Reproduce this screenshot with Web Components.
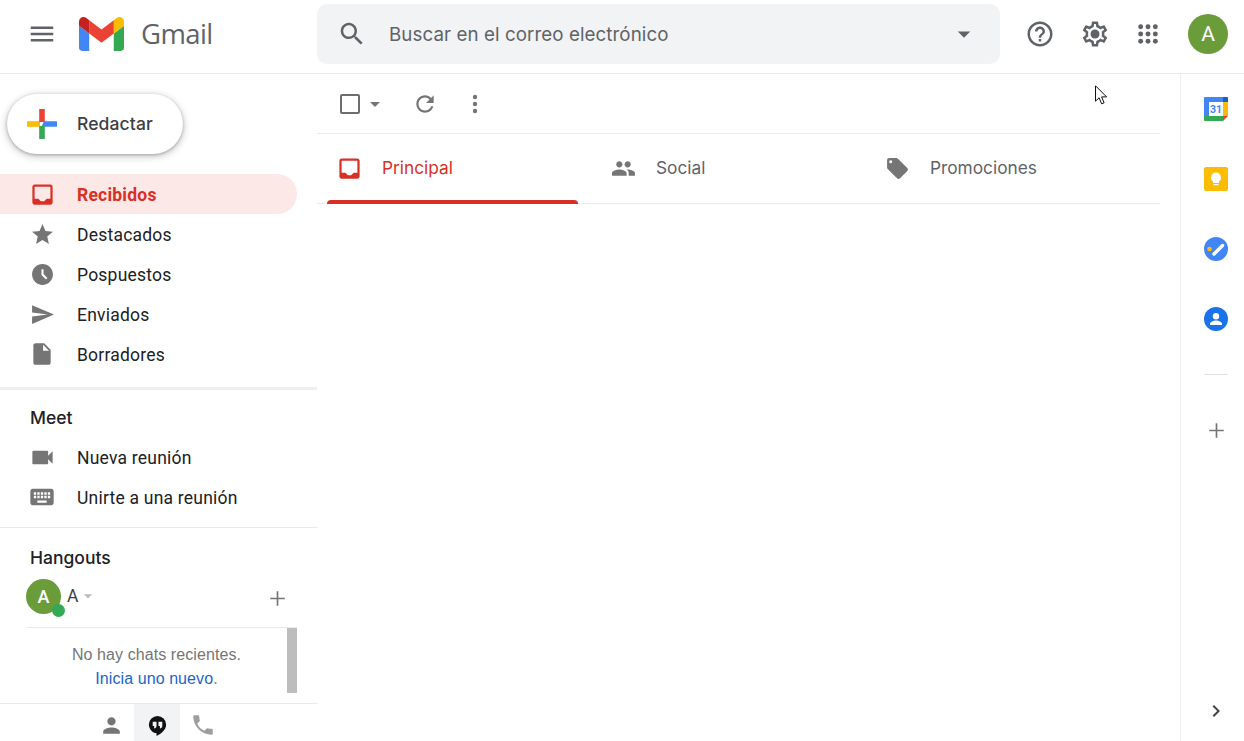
<!DOCTYPE html>
<html lang="es">
<head>
<meta charset="utf-8">
<title>Gmail</title>
<style>
  html, body { margin: 0; height: 100%; background: #fff; overflow: hidden; }
  body { font-family: Roboto, "Liberation Sans", sans-serif; color: #202124; }
</style>
</head>
<body>
<gm-app>
  <gm-header slot="header"></gm-header>
  <gm-sidebar slot="sidebar">
    <gm-compose slot="compose">Redactar</gm-compose>
    <gm-nav-item slot="nav" icon="inbox" icon-size="27" active>Recibidos</gm-nav-item>
    <gm-nav-item slot="nav" icon="star" icon-size="25">Destacados</gm-nav-item>
    <gm-nav-item slot="nav" icon="clock" icon-size="25">Pospuestos</gm-nav-item>
    <gm-nav-item slot="nav" icon="send" icon-size="25">Enviados</gm-nav-item>
    <gm-nav-item slot="nav" icon="draft" icon-size="26">Borradores</gm-nav-item>
    <gm-nav-item slot="meet" icon="video" icon-size="27">Nueva reunión</gm-nav-item>
    <gm-nav-item slot="meet" icon="keyboard" icon-size="28">Unirte a una reunión</gm-nav-item>
    <gm-hangouts slot="hangouts"></gm-hangouts>
  </gm-sidebar>
  <gm-main slot="main">
    <gm-tab slot="tabs" icon="inbox" icon-size="27" active>Principal</gm-tab>
    <gm-tab slot="tabs" icon="people" icon-size="25">Social</gm-tab>
    <gm-tab slot="tabs" icon="label" icon-size="25">Promociones</gm-tab>
  </gm-main>
  <gm-rail slot="rail"></gm-rail>
</gm-app>

<script>
const ICONS = {
  menu: '<path d="M3 18h18v-2H3v2zm0-5h18v-2H3v2zm0-7v2h18V6H3z"/>',
  search: '<path d="M15.5 14h-.79l-.28-.27C15.41 12.59 16 11.11 16 9.5 16 5.91 13.09 3 9.5 3S3 5.91 3 9.5 5.91 16 9.5 16c1.61 0 3.09-.59 4.23-1.57l.27.28v.79l5 4.99L20.49 19l-4.99-5zm-6 0C7.01 14 5 11.99 5 9.5S7.01 5 9.5 5 14 7.01 14 9.5 11.99 14 9.5 14z"/>',
  help: '<path d="M11 18h2v-2h-2v2zm1-16C6.48 2 2 6.48 2 12s4.48 10 10 10 10-4.48 10-10S17.52 2 12 2zm0 18c-4.41 0-8-3.59-8-8s3.59-8 8-8 8 3.59 8 8-3.59 8-8 8zm0-14c-2.21 0-4 1.79-4 4h2c0-1.1.9-2 2-2s2 .9 2 2c0 2-3 1.75-3 5h2c0-2.25 3-2.5 3-5 0-2.21-1.79-4-4-4z"/>',
  settings: '<path d="M19.43 12.98c.04-.32.07-.64.07-.98 0-.34-.03-.66-.07-.98l2.11-1.65c.19-.15.24-.42.12-.64l-2-3.46c-.09-.16-.26-.25-.44-.25-.06 0-.12.01-.17.03l-2.49 1c-.52-.4-1.08-.73-1.69-.98l-.38-2.65C14.46 2.18 14.25 2 14 2h-4c-.25 0-.46.18-.49.42l-.38 2.65c-.61.25-1.17.59-1.69.98l-2.49-1c-.06-.02-.12-.03-.18-.03-.17 0-.34.09-.43.25l-2 3.46c-.13.22-.07.49.12.64l2.11 1.65c-.04.32-.07.65-.07.98 0 .33.03.66.07.98l-2.11 1.65c-.19.15-.24.42-.12.64l2 3.46c.09.16.26.25.44.25.06 0 .12-.01.17-.03l2.49-1c.52.4 1.08.73 1.69.98l.38 2.65c.03.24.24.42.49.42h4c.25 0 .46-.18.49-.42l.38-2.65c.61-.25 1.17-.59 1.69-.98l2.49 1c.06.02.12.03.18.03.17 0 .34-.09.43-.25l2-3.46c.12-.22.07-.49-.12-.64l-2.11-1.65zm-1.98-1.71c.04.31.05.52.05.73 0 .21-.02.43-.05.73l-.14 1.13.89.7 1.08.84-.7 1.21-1.27-.51-1.04-.42-.9.68c-.43.32-.84.56-1.25.73l-1.06.43-.16 1.13-.2 1.35h-1.4l-.19-1.35-.16-1.13-1.06-.43c-.43-.18-.83-.41-1.23-.71l-.91-.7-1.06.43-1.27.51-.7-1.21 1.08-.84.89-.7-.14-1.13c-.03-.31-.05-.54-.05-.74s.02-.43.05-.73l.14-1.13-.89-.7-1.08-.84.7-1.21 1.27.51 1.04.42.9-.68c.43-.32.84-.56 1.25-.73l1.06-.43.16-1.13.2-1.35h1.39l.19 1.35.16 1.13 1.06.43c.43.18.83.41 1.23.71l.91.7 1.06-.43 1.27-.51.7 1.21-1.07.85-.89.7.14 1.13z"/><circle cx="12" cy="12" r="3.6"/>',
  apps: '<circle cx="4" cy="4" r="2.7"/><circle cx="12" cy="4" r="2.7"/><circle cx="20" cy="4" r="2.7"/><circle cx="4" cy="12" r="2.7"/><circle cx="12" cy="12" r="2.7"/><circle cx="20" cy="12" r="2.7"/><circle cx="4" cy="20" r="2.7"/><circle cx="12" cy="20" r="2.7"/><circle cx="20" cy="20" r="2.7"/>',
  inbox: '<path fill-rule="evenodd" d="M19 3H5c-1.1 0-2 .9-2 2v14c0 1.1.9 2 2 2h14c1.1 0 2-.9 2-2V5c0-1.1-.9-2-2-2zm0 12.7h-3.3L13.5 18h-3l-2.200-2.300H5V5h14z"/>',
  star: '<path d="M12 17.27L18.18 21l-1.64-7.03L22 9.24l-7.19-.61L12 2 9.19 8.63 2 9.24l5.46 4.73L5.82 21z"/>',
  clock: '<path d="M11.99 2C6.47 2 2 6.48 2 12s4.47 10 9.99 10C17.52 22 22 17.52 22 12S17.52 2 11.99 2zm3.3 14.71L11 12.41V7h2v4.59l3.71 3.71-1.42 1.41z"/>',
  send: '<path d="M2.01 21L23 12 2.01 3 2 10l15 2-15 2z"/>',
  draft: '<path d="M6 2c-1.1 0-1.99.9-1.99 2L4 20c0 1.1.89 2 1.99 2H18c1.1 0 2-.9 2-2V8l-6-6H6zm7 7V3.5L18.5 9H13z"/>',
  video: '<path d="M17 10.5V7c0-.55-.45-1-1-1H4c-.55 0-1 .45-1 1v10c0 .55.45 1 1 1h12c.55 0 1-.45 1-1v-3.5l4 4v-11l-4 4z"/>',
  keyboard: '<path d="M20 5H4c-1.1 0-1.99.9-1.99 2L2 17c0 1.1.9 2 2 2h16c1.1 0 2-.9 2-2V7c0-1.1-.9-2-2-2zm-9 3h2v2h-2V8zm0 3h2v2h-2v-2zM8 8h2v2H8V8zm0 3h2v2H8v-2zm-1 2H5v-2h2v2zm0-3H5V8h2v2zm9 7H8v-2h8v2zm0-4h-2v-2h2v2zm0-3h-2V8h2v2zm3 3h-2v-2h2v2zm0-3h-2V8h2v2z"/>',
  people: '<path d="M16 11c1.66 0 2.99-1.34 2.99-3S17.66 5 16 5c-1.66 0-3 1.34-3 3s1.34 3 3 3zm-8 0c1.66 0 2.99-1.34 2.99-3S9.66 5 8 5C6.34 5 5 6.34 5 8s1.34 3 3 3zm0 2c-2.33 0-7 1.17-7 3.5V19h14v-2.5c0-2.33-4.67-3.5-7-3.5zm8 0c-.29 0-.62.02-.97.05 1.16.84 1.97 1.97 1.97 3.45V19h6v-2.5c0-2.33-4.67-3.5-7-3.5z"/>',
  label: '<path d="M21.41 11.58l-9-9C12.05 2.22 11.55 2 11 2H4c-1.1 0-2 .9-2 2v7c0 .55.22 1.05.59 1.42l9 9c.36.36.86.58 1.41.58.55 0 1.05-.22 1.41-.59l7-7c.37-.36.59-.86.59-1.41 0-.55-.23-1.06-.59-1.42zM5.5 7C4.67 7 4 6.33 4 5.5S4.67 4 5.5 4 7 4.67 7 5.5 6.33 7 5.5 7z"/>',
  refresh: '<path d="M17.65 6.35C16.2 4.9 14.21 4 12 4c-4.42 0-7.99 3.58-7.99 8s3.57 8 7.99 8c3.73 0 6.84-2.55 7.73-6h-2.08c-.82 2.33-3.04 4-5.65 4-3.31 0-6-2.69-6-6s2.69-6 6-6c1.66 0 3.14.69 4.22 1.78L13 11h7V4l-2.35 2.35z"/>',
  more: '<circle cx="12" cy="5" r="2.2"/><circle cx="12" cy="12" r="2.2"/><circle cx="12" cy="19" r="2.2"/>',
  person: '<path d="M12 12c2.21 0 4-1.79 4-4s-1.79-4-4-4-4 1.79-4 4 1.79 4 4 4zm0 2c-2.67 0-8 1.34-8 4v2h16v-2c0-2.66-5.33-4-8-4z"/>',
  phone: '<path d="M6.62 10.79c1.44 2.83 3.76 5.14 6.59 6.59l2.2-2.2c.27-.27.67-.36 1.02-.24 1.12.37 2.33.57 3.57.57.55 0 1 .45 1 1V20c0 .55-.45 1-1 1-9.39 0-17-7.61-17-17 0-.55.45-1 1-1h3.5c.55 0 1 .45 1 1 0 1.25.2 2.45.57 3.57.11.35.03.74-.25 1.02l-2.2 2.2z"/>',
  chat: '<path fill-rule="evenodd" d="M12 2a9 9 0 0 0-9 9c0 5 4 9 8 9v3c5-2.400 10-6.500 10-12a9 9 0 0 0-9-9zM7 8h4v4.500c0 1.600-1.200 2.500-2.500 2.500v-2.500H7zm6 0h4v4.500c0 1.600-1.200 2.500-2.500 2.500v-2.500H13z"/>',
  plus: '<path d="M19 12.800h-6.200V19h-1.600v-6.200H5v-1.600h6.200V5h1.600v6.200H19z"/>',
  chevron: '<path d="M10 6L8.590 7.410 13.170 12l-4.580 4.590L10 18l6-6z"/>',
  caret: '<path d="M7 10l5 5 5-5z"/>'
};

class GmIcon extends HTMLElement {
  connectedCallback () {
    const size = this.getAttribute("size") || 24;
    const color = this.getAttribute("color") || "#5f6368";
    this.attachShadow({ mode: "open" }).innerHTML = `
    <style>
      :host { display: inline-flex; width: ${size}px; height: ${size}px; flex: none; }
      svg { width: 100%; height: 100%; fill: ${color}; display: block; }
    </style>
    <svg viewBox="0 0 24 24">${ICONS[this.getAttribute("name")] || ""}</svg>`;
  }
}

class GmApp extends HTMLElement {
  constructor () {
    super();
    this.attachShadow({ mode: "open" }).innerHTML = `
    <style>
      :host { display: flex; flex-direction: column; height: 741px; position: relative; overflow: hidden; }
      .body { flex: 1; min-height: 0; display: flex; }
      .cursor { position: absolute; left: 1095px; top: 85px; width: 13px; height: 20px; }
    </style>
    <slot name="header"></slot>
    <div class="body">
      <slot name="sidebar"></slot>
      <slot name="main"></slot>
      <slot name="rail"></slot>
    </div>
    <svg class="cursor" viewBox="0 0 13 20"><path d="M.5.800v15.400l3.600-3.400 2.500 6 2.500-1-2.500-5.900h5z" fill="#fff" stroke="#111" stroke-width="1"/></svg>`;
  }
}

class GmHeader extends HTMLElement {
  constructor () {
    super();
    this.attachShadow({ mode: "open" }).innerHTML = `
    <style>
      :host { display: flex; align-items: center; height: 73px; border-bottom: 1px solid #e8eaed; flex: none; box-sizing: content-box; }
      .brand { width: 317px; display: flex; align-items: center; flex: none; padding-left: 27px; box-sizing: border-box; margin-top: -5px; }
      .logo { width: 45px; height: 34px; margin-left: 22px; display: block; }
      .word { font: 400 27.5px/1 "Open Sans", sans-serif; color: #5f6368; margin-left: 17px; letter-spacing: -0.6px; }
      .search { width: 683px; height: 60px; background: #f1f3f4; border-radius: 10px; display: flex; align-items: center; box-sizing: border-box; padding: 0 21px 0 20px; margin-top: -5px; flex: none; }
      .search span { flex: 1; margin-left: 22px; padding-top: 2px; font: 400 18.75px/1 Inter, sans-serif; color: #5f6368; letter-spacing: 0.07px; }
      .actions { display: flex; align-items: center; flex: 1; margin-top: -5px; padding-left: 25px; }
      .help { margin-right: 25px; }
      .gear { margin-right: 27px; }
      .apps { margin-right: 29px; }
      .avatar { width: 40px; height: 40px; border-radius: 50%; background: #6a9c3a; color: #fff; font: 400 21px/40px Roboto, sans-serif; text-align: center; }
    </style>
    <div class="brand">
      <gm-icon name="menu" size="30"></gm-icon>
      <svg class="logo" viewBox="52 42 88 66">
        <path fill="#4285f4" d="M58 108h14V74L52 59v43c0 3.320 2.690 6 6 6"/>
        <path fill="#34a853" d="M120 108h14c3.320 0 6-2.690 6-6V59l-20 15"/>
        <path fill="#fbbc04" d="M120 48v26l20-15v-8c0-7.420-8.470-11.650-14.400-7.200"/>
        <path fill="#ea4335" d="M72 74V48l24 18 24-18v26L96 92"/>
        <path fill="#c5221f" d="M52 51v8l20 15V48l-5.600-4.200c-5.940-4.450-14.400-.220-14.400 7.200"/>
      </svg>
      <span class="word">Gmail</span>
    </div>
    <div class="search">
      <gm-icon name="search" size="30"></gm-icon>
      <span>Buscar en el correo electrónico</span>
      <gm-icon name="caret" size="30"></gm-icon>
    </div>
    <div class="actions">
      <gm-icon class="help" name="help" size="30"></gm-icon>
      <gm-icon class="gear" name="settings" size="30"></gm-icon>
      <gm-icon class="apps" name="apps" size="22"></gm-icon>
      <div class="avatar">A</div>
    </div>`;
  }
}

class GmCompose extends HTMLElement {
  constructor () {
    super();
    this.attachShadow({ mode: "open" }).innerHTML = `
    <style>
      :host { display: flex; align-items: center; width: 176px; height: 60px; border-radius: 30px; background: #fff; box-sizing: border-box; padding-left: 20px; box-shadow: 0 1px 3px rgba(60,64,67,.35), 0 2px 6px 2px rgba(60,64,67,.2); flex: none; }
      svg { width: 30px; height: 30px; flex: none; }
      span { margin-left: 20px; font: 500 17.5px/1 Inter, sans-serif; color: #3c4043; letter-spacing: .1px; }
    </style>
    <svg viewBox="0 0 30 30">
      <path fill="#fbbc04" d="M0 12.200h13v5.600H0z"/>
      <path fill="#ea4335" d="M12.200 0h5.600v13h-5.600z"/>
      <path fill="#4285f4" d="M17 12.200h13v5.600H14.500z"/>
      <path fill="#34a853" d="M12.200 17h5.600v13h-5.600z"/>
    </svg>
    <span><slot></slot></span>`;
  }
}

class GmNavItem extends HTMLElement {
  constructor () {
    super();
    this.attachShadow({ mode: "open" });
  }

  connectedCallback () {
    const active = this.hasAttribute("active");
    const icon = this.getAttribute("icon");
    const size = this.getAttribute("icon-size") || 25;
    this.shadowRoot.innerHTML = `
    <style>
      :host { display: flex; align-items: center; height: 40px; width: 297px; box-sizing: border-box; padding-left: 27px; border-radius: 0 20px 20px 0; background: ${active ? "#fce8e6" : "transparent"}; color: ${active ? "#d93025" : "#202124"}; font: ${active ? 700 : 400} 17.5px/1 Roboto, sans-serif; letter-spacing: .22px; }
      .slot { width: 30px; display: flex; justify-content: center; flex: none; }
      span { margin-left: 20px; padding-top: 4px; }
    </style>
    <div class="slot"><gm-icon name="${icon}" size="${size}" color="${active ? "#d93025" : "#757575"}"></gm-icon></div>
    <span><slot></slot></span>`;
  }
}

class GmSidebar extends HTMLElement {
  constructor () {
    super();
    this.attachShadow({ mode: "open" }).innerHTML = `
    <style>
      :host { display: flex; flex-direction: column; width: 317px; flex: none; }
      .top { height: 313px; padding: 20px 0 0 7px; box-sizing: border-box; flex: none; }
      nav { display: flex; flex-direction: column; margin: 20px 0 0 -7px; }
      .meet { height: 141px; box-sizing: border-box; border-top: 3px solid #eef0f0; flex: none; border-bottom: 1px solid #e8eaed; }
      h3 { margin: 0; font: 500 17.5px/1 Inter, sans-serif; color: #202124; padding-left: 30px; }
      .meet h3 { padding-top: 19px; height: 47px; box-sizing: border-box; }
      .rows { display: flex; flex-direction: column; }
    </style>
    <div class="top">
      <slot name="compose"></slot>
      <nav><slot name="nav"></slot></nav>
    </div>
    <div class="meet">
      <h3>Meet</h3>
      <div class="rows"><slot name="meet"></slot></div>
    </div>
    <slot name="hangouts"></slot>`;
  }
}

class GmHangouts extends HTMLElement {
  constructor () {
    super();
    this.attachShadow({ mode: "open" }).innerHTML = `
    <style>
      :host { display: flex; flex-direction: column; flex: 1; min-height: 0; }
      h3 { margin: 0; font: 500 17.5px/1 Inter, sans-serif; color: #202124; padding: 21px 0 0 30px; height: 51px; box-sizing: border-box; flex: none; }
      .me { display: flex; align-items: center; height: 49px; margin-left: 26px; width: 271px; border-bottom: 1px solid #e8eaed; box-sizing: border-box; padding-bottom: 13px; flex: none; }
      .avatar { width: 35px; height: 35px; border-radius: 50%; background: #6a9c3a; color: #fff; font: 500 18px/35px Roboto, sans-serif; text-align: center; position: relative; flex: none; }
      .avatar i { position: absolute; left: 26px; top: 25px; width: 13px; height: 13px; border-radius: 50%; background: #34a853; }
      .name { margin-left: 6px; font: 400 17.5px/1 Roboto, sans-serif; color: #3c4043; }
      .caret { margin-left: 0; margin-top: -1px; }
      .plus { margin-left: auto; margin-right: 7px; margin-top: 4px; }
      .list { height: 75px; margin-left: 26px; width: 271px; display: flex; flex: none; }
      .msg { flex: 1; text-align: center; font: 400 16px/24px "Liberation Sans", Arial, sans-serif; color: #757575; padding-top: 15px; box-sizing: border-box; letter-spacing: .08px; }
      .msg a { color: #1a66c7; text-decoration: none; }
      .bar { width: 10px; height: 65px; background: #bdbdbd; flex: none; }
      .tabs { flex: 1; border-top: 1px solid #e8eaed; display: flex; justify-content: center; padding-right: 3px; }
      .tab { width: 46px; display: flex; align-items: center; justify-content: center; padding-top: 5px; box-sizing: border-box; }
      .tab.on { background: #f1f3f4; }
    </style>
    <h3>Hangouts</h3>
    <div class="me">
      <div class="avatar">A<i></i></div>
      <span class="name">A</span>
      <gm-icon class="caret" name="caret" size="20" color="#bdbdbd"></gm-icon>
      <gm-icon class="plus" name="plus" size="25" color="#757575"></gm-icon>
    </div>
    <div class="list">
      <div class="msg">No hay chats recientes.<br><a>Inicia uno nuevo</a>.</div>
      <div class="bar"></div>
    </div>
    <div class="tabs">
      <div class="tab"><gm-icon name="person" size="25" color="#757575"></gm-icon></div>
      <div class="tab on"><gm-icon name="chat" size="23" color="#111"></gm-icon></div>
      <div class="tab"><gm-icon name="phone" size="26" color="#9e9e9e"></gm-icon></div>
    </div>`;
  }
}

class GmTab extends HTMLElement {
  constructor () {
    super();
    this.attachShadow({ mode: "open" });
  }

  connectedCallback () {
    const active = this.hasAttribute("active");
    const size = this.getAttribute("icon-size") || 25;
    this.shadowRoot.innerHTML = `
    <style>
      :host { display: flex; align-items: center; position: relative; height: 69px; padding: 0 0 1px 17px; box-sizing: border-box; color: ${active ? "#d93025" : "#5f6368"}; font: 400 17.3px/1 Inter, sans-serif; }
      .slot { width: 30px; display: flex; justify-content: center; flex: none; }
      span { margin-left: 18px; }
      .bar { position: absolute; left: 10px; width: 251px; bottom: -1px; height: 4px; border-radius: 4px 4px 0 0; background: #d93025; display: ${active ? "block" : "none"}; }
    </style>
    <div class="slot"><gm-icon name="${this.getAttribute("icon")}" size="${size}" color="${active ? "#d93025" : "#757575"}"></gm-icon></div>
    <span><slot></slot></span>
    <div class="bar"></div>`;
  }
}

class GmMain extends HTMLElement {
  constructor () {
    super();
    this.attachShadow({ mode: "open" }).innerHTML = `
    <style>
      :host { display: block; flex: 1; min-width: 0; margin-right: 20px; }
      .toolbar { height: 60px; border-bottom: 1px solid #e8eaed; display: flex; align-items: center; padding-left: 18px; box-sizing: border-box; }
      .check { width: 20px; height: 20px; border: 2px solid #6b6e72; border-radius: 2px; box-sizing: border-box; margin-left: 5px; margin-top: 1px; }
      .tabs { display: grid; grid-template-columns: repeat(3, 274px); border-bottom: 1px solid #e8eaed; height: 70px; box-sizing: border-box; }
      .caret { margin-left: 3px; }
      .refresh { margin-left: 25px; margin-top: 1px; }
      .more { margin-left: 25px; margin-top: 1px; }
    </style>
    <div class="toolbar">
      <div class="check"></div>
      <gm-icon class="caret" name="caret" size="24" color="#757575"></gm-icon>
      <gm-icon class="refresh" name="refresh" size="26" color="#757575"></gm-icon>
      <gm-icon class="more" name="more" size="24" color="#757575"></gm-icon>
    </div>
    <div class="tabs"><slot name="tabs"></slot></div>`;
  }
}

class GmRail extends HTMLElement {
  constructor () {
    super();
    this.attachShadow({ mode: "open" }).innerHTML = `
    <style>
      :host { display: flex; flex-direction: column; align-items: center; width: 64px; flex: none; border-left: 1px solid #eceef0; box-sizing: border-box; padding: 23px 0 18px 7px; }
      .app { width: 24px; height: 24px; margin-bottom: 46px; display: block; flex: none; }
      hr { width: 24px; margin: 0 0 43px; border: 0; border-top: 1px solid #e0e0e0; }
      .sep { margin-top: -3px; }
      .end { margin-top: auto; }
    </style>
    <svg class="app" viewBox="0 0 24 24">
      <path fill="#fff" d="M5 5h14v14H5z"/>
      <path fill="#4285f4" d="M1 0h18v5H5v14H0V1a1 1 0 0 1 1-1z"/>
      <path fill="#1a5fc8" d="M19 0h4a1 1 0 0 1 1 1v4h-5z"/>
      <path fill="#fbbc04" d="M19 5h5v14h-5z"/>
      <path fill="#34a853" d="M0 19h19v5H1a1 1 0 0 1-1-1z"/>
      <path fill="#ea4335" d="M19 24v-5h5z"/>
      <text x="12" y="16" text-anchor="middle" font-family="Roboto, sans-serif" font-size="10.5" font-weight="700" fill="#4285f4">31</text>
    </svg>
    <svg class="app" viewBox="0 0 24 24">
      <rect width="24" height="24" rx="2" fill="#fbbc04"/>
      <path fill="#fff" d="M12 5.500a5 5 0 0 0-3 9v1.500h6v-1.500a5 5 0 0 0-3-9zM9.500 17h5v1.200h-5z"/>
    </svg>
    <svg class="app" viewBox="0 0 24 24">
      <circle cx="12" cy="12" r="12" fill="#4285f4"/>
      <path d="M10 17l8.500-8.500" stroke="#fff" stroke-width="3.4" stroke-linecap="round"/>
      <circle cx="5.500" cy="12" r="2.300" fill="#fbbc04"/>
    </svg>
    <svg class="app" viewBox="0 0 24 24">
      <circle cx="12" cy="12" r="12" fill="#1a73e8"/>
      <circle cx="12" cy="9.300" r="3.200" fill="#fff"/>
      <path fill="#fff" d="M6 17.200c0-2.400 3.600-3.600 6-3.600s6 1.200 6 3.600V18H6z"/>
    </svg>
    <hr class="sep">
    <gm-icon name="plus" size="25" color="#757575"></gm-icon>
    <gm-icon class="end" name="chevron" size="24" color="#444"></gm-icon>`;
  }
}

customElements.define("gm-icon", GmIcon);
customElements.define("gm-app", GmApp);
customElements.define("gm-header", GmHeader);
customElements.define("gm-compose", GmCompose);
customElements.define("gm-nav-item", GmNavItem);
customElements.define("gm-sidebar", GmSidebar);
customElements.define("gm-hangouts", GmHangouts);
customElements.define("gm-tab", GmTab);
customElements.define("gm-main", GmMain);
customElements.define("gm-rail", GmRail);
</script>
</body>
</html>
